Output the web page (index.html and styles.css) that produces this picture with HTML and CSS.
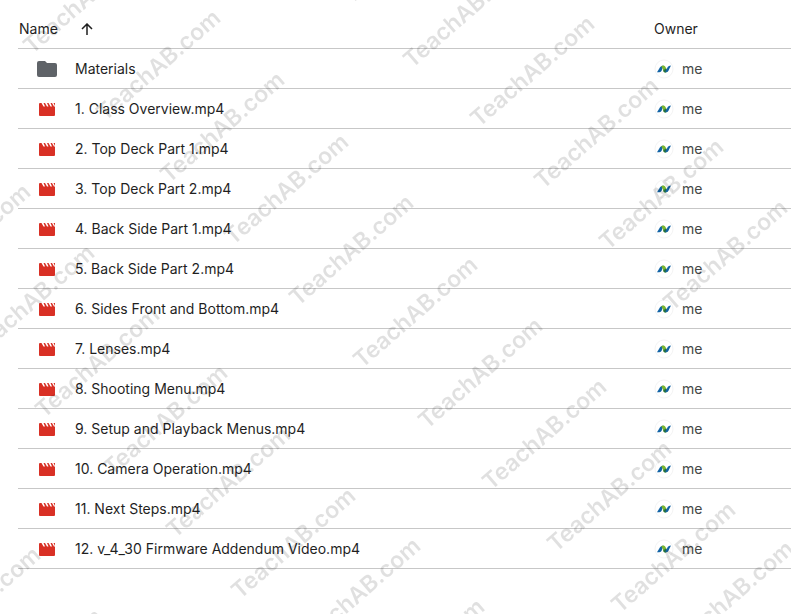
FILE: index.html
```html
<!DOCTYPE html>
<html lang="en">
<head>
<meta charset="utf-8">
<title>Files</title>
<link rel="stylesheet" href="styles.css">
</head>
<body>
<svg class="symbols" aria-hidden="true">
  <symbol id="folder" viewBox="0 0 20 16"><path fill="#5f6368" d="M2 0h6l2 2h8a2 2 0 0 1 2 2v10a2 2 0 0 1-2 2H2a2 2 0 0 1-2-2V2a2 2 0 0 1 2-2z"/></symbol>
  <symbol id="film" viewBox="0 -2 16 15"><path fill="#d93025" d="M0 1a1 1 0 0 1 1-1h1.500l2 3.500h1.500L4.500 0H6l2 3.500h1.500L8 0h1.500l2 3.500h1.500L11.500 0H13l2 3.500h1V12a1 1 0 0 1-1 1H1a1 1 0 0 1-1-1z"/><path fill="#d93025" d="M14.500 0H16v3z"/></symbol>
  <symbol id="avatar" viewBox="0 0 20 20">
    <circle cx="10" cy="10" r="9" fill="none" stroke="#f4f4f4"/>
    <path fill="#1263a5" d="M3 13.300 6.200 8Q7.200 6.500 9.500 6.500L7.500 12Q6.500 13.300 5 13.300z"/>
    <path fill="#79b52c" d="M7.200 7.200Q8 6.500 9.500 6.500 10.900 6.500 11.500 8L13.500 12.500Q11 14.300 9.500 12.500L8.500 9.500z"/>
    <path fill="#236d42" d="M9.500 11 12.300 9.500 13.500 12.500Q11 14.300 9.500 12.500z"/>
    <path fill="#1263a5" d="M11.200 13.300 13.700 8Q14.500 6.500 17 6.500L14.300 12Q13.500 13.300 11.200 13.300z"/>
  </symbol>
</svg>
<main class="files">
<table class="file-table">
<colgroup><col class="type-col"><col><col class="owner-col"></colgroup>
<thead><tr>
  <th class="name-head" colspan="2" scope="col"><span class="sort">Name
    <svg class="arrow" viewBox="0 0 12 12" aria-hidden="true"><path d="M6 12V1M1 6l5-5 5 5"/></svg></span></th>
  <th scope="col">Owner</th>
</tr></thead>
<tbody>
<tr><td class="type"><svg class="folder"><use href="#folder"/></svg></td><td>Materials</td><td><span class="person"><svg class="avatar"><use href="#avatar"/></svg>me</span></td></tr>
<tr><td class="type"><svg class="film"><use href="#film"/></svg></td><td>1. Class Overview.mp4</td><td><span class="person"><svg class="avatar"><use href="#avatar"/></svg>me</span></td></tr>
<tr><td class="type"><svg class="film"><use href="#film"/></svg></td><td>2. Top Deck Part 1.mp4</td><td><span class="person"><svg class="avatar"><use href="#avatar"/></svg>me</span></td></tr>
<tr><td class="type"><svg class="film"><use href="#film"/></svg></td><td>3. Top Deck Part 2.mp4</td><td><span class="person"><svg class="avatar"><use href="#avatar"/></svg>me</span></td></tr>
<tr><td class="type"><svg class="film"><use href="#film"/></svg></td><td>4. Back Side Part 1.mp4</td><td><span class="person"><svg class="avatar"><use href="#avatar"/></svg>me</span></td></tr>
<tr><td class="type"><svg class="film"><use href="#film"/></svg></td><td>5. Back Side Part 2.mp4</td><td><span class="person"><svg class="avatar"><use href="#avatar"/></svg>me</span></td></tr>
<tr><td class="type"><svg class="film"><use href="#film"/></svg></td><td>6. Sides Front and Bottom.mp4</td><td><span class="person"><svg class="avatar"><use href="#avatar"/></svg>me</span></td></tr>
<tr><td class="type"><svg class="film"><use href="#film"/></svg></td><td>7. Lenses.mp4</td><td><span class="person"><svg class="avatar"><use href="#avatar"/></svg>me</span></td></tr>
<tr><td class="type"><svg class="film"><use href="#film"/></svg></td><td>8. Shooting Menu.mp4</td><td><span class="person"><svg class="avatar"><use href="#avatar"/></svg>me</span></td></tr>
<tr><td class="type"><svg class="film"><use href="#film"/></svg></td><td>9. Setup and Playback Menus.mp4</td><td><span class="person"><svg class="avatar"><use href="#avatar"/></svg>me</span></td></tr>
<tr><td class="type"><svg class="film"><use href="#film"/></svg></td><td>10. Camera Operation.mp4</td><td><span class="person"><svg class="avatar"><use href="#avatar"/></svg>me</span></td></tr>
<tr><td class="type"><svg class="film"><use href="#film"/></svg></td><td>11. Next Steps.mp4</td><td><span class="person"><svg class="avatar"><use href="#avatar"/></svg>me</span></td></tr>
<tr><td class="type"><svg class="film"><use href="#film"/></svg></td><td>12. v_4_30 Firmware Addendum Video.mp4</td><td><span class="person"><svg class="avatar"><use href="#avatar"/></svg>me</span></td></tr>
</tbody>
</table>
</main>
<svg class="watermark" aria-hidden="true">
  <text transform="translate(32 55) rotate(-41)">TeachAB.com</text>
  <text transform="translate(105 122) rotate(-41)">TeachAB.com</text>
  <text transform="translate(169 184) rotate(-41)">TeachAB.com</text>
  <text transform="translate(233 246) rotate(-41)">TeachAB.com</text>
  <text transform="translate(298 307) rotate(-41)">TeachAB.com</text>
  <text transform="translate(362 369) rotate(-41)">TeachAB.com</text>
  <text transform="translate(427 430) rotate(-41)">TeachAB.com</text>
  <text transform="translate(491 491) rotate(-41)">TeachAB.com</text>
  <text transform="translate(556 553) rotate(-41)">TeachAB.com</text>
  <text transform="translate(620 614) rotate(-41)">TeachAB.com</text>
  <text transform="translate(351 5) rotate(-41)">TeachAB.com</text>
  <text transform="translate(412 69) rotate(-41)">TeachAB.com</text>
  <text transform="translate(479 128) rotate(-41)">TeachAB.com</text>
  <text transform="translate(543 190) rotate(-41)">TeachAB.com</text>
  <text transform="translate(608 251) rotate(-41)">TeachAB.com</text>
  <text transform="translate(672 312) rotate(-41)">TeachAB.com</text>
  <text transform="translate(-85 296) rotate(-41)">TeachAB.com</text>
  <text transform="translate(-21 357) rotate(-41)">TeachAB.com</text>
  <text transform="translate(44 419) rotate(-41)">TeachAB.com</text>
  <text transform="translate(112 477) rotate(-41)">TeachAB.com</text>
  <text transform="translate(175 539) rotate(-41)">TeachAB.com</text>
  <text transform="translate(240 600) rotate(-41)">TeachAB.com</text>
  <text transform="translate(305 650) rotate(-41)">TeachAB.com</text>
  <text transform="translate(369 711) rotate(-41)">TeachAB.com</text>
  <text transform="translate(-75 659) rotate(-41)">TeachAB.com</text>
  <text transform="translate(-13 721) rotate(-41)">TeachAB.com</text>
  <text transform="translate(678 653) rotate(-41)">TeachAB.com</text>
</svg>
</body>
</html>
```
FILE: styles.css
```css
body {
  margin: 0;
  background: #fff;
  color: #1f1f1f;
  font: 14px/20px Inter, "Open Sans", sans-serif;
}
.symbols { position: absolute; width: 0; height: 0; }
.files { padding: 8px 0 0 18px; }
.file-table {
  width: 100%;
  border-collapse: separate;
  border-spacing: 0;
  table-layout: fixed;
}
.type-col { width: 57px; }
.owner-col { width: 137px; }
.file-table th, .file-table td {
  height: 39px;
  padding: 0;
  border-bottom: 1px solid #c7c7c7;
  text-align: left;
  font-weight: 400;
}
.file-table th { height: 38px; padding-top: 2px; }
.file-table .name-head { padding-left: 1px; }
.sort { display: flex; align-items: center; gap: 23px; }
.arrow { width: 12px; height: 12px; fill: none; stroke: #1f1f1f; stroke-width: 1.5; }
.type svg { display: block; margin: 0 auto; }
.folder { width: 20px; height: 16px; }
.film { width: 16px; height: 15px; }
.person { display: flex; align-items: center; gap: 8px; color: #444746; }
.avatar { width: 20px; height: 20px; }
.watermark {
  position: fixed;
  inset: 0;
  width: 100%;
  height: 100%;
  pointer-events: none;
  font: 600 23px Inter, sans-serif;
  fill: rgba(0, 0, 0, 0.12);
}
```
